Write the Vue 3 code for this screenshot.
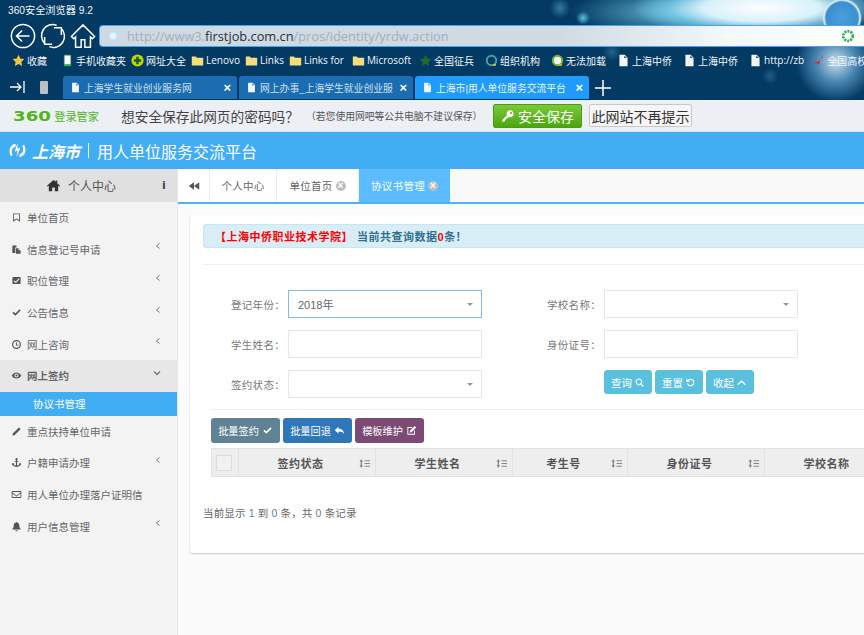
<script setup>
const icons = {
  home: 'M8 2 1 8.2l.8 1L3 8.1V14h3.6v-4h2.8v4H13V8.1l1.2 1.1.8-1-3-2.7V2.6h-1.8v1.3z',
  bookmark: 'M3 2h10v12l-5-3-5 3zM4.2 3.2v8.5L8 9.6l3.8 2.1V3.2z',
  files: 'M2 2h6v3H6v8H2zM7 6h4l3 3v5H7zM11 6.5V9h3z',
  checkSquare: 'M3 3h10a1 1 0 0 1 1 1v8a1 1 0 0 1-1 1H3a1 1 0 0 1-1-1V4a1 1 0 0 1 1-1zm1.3 5L3.6 9 7 11.8l5.5-6-1-1L7 9.6z',
  check: 'M2 8.6 3.8 6.8 6.4 9.3 12.3 3.4 14 5.2 6.4 12.8z',
  clock: 'M8 1.5a6.5 6.5 0 1 1 0 13 6.5 6.5 0 0 1 0-13zm0 1.8a4.7 4.7 0 1 0 0 9.4 4.7 4.7 0 0 0 0-9.4zM7.2 5h1.4v3.2H11v1.3H7.2z',
  eye: 'M8 3.5c3.2 0 5.6 2.2 7 4.5-1.4 2.3-3.8 4.5-7 4.5S2.400 10.300 1 8c1.400-2.300 3.800-4.500 7-4.500zM8 5a3 3 0 1 0 0 6 3 3 0 0 0 0-6zm0 1.500a1.500 1.500 0 1 1 0 3 1.500 1.500 0 0 1 0-3z',
  pencil: 'M11.500 2 14 4.500 5.500 13 2 14l1-3.500z',
  anchor: 'M8 1.500a1.700 1.700 0 0 1 .8 3.200V6H11v1.300H8.800v5.200c1.500-.2 2.600-1 3-2L10.800 10 14 8.500l.6 3.500-1-.7C12.800 13.200 10.600 14.500 8 14.500S3.200 13.200 2.400 11.300l-1 .7L2 8.500 5.200 10l-1 .5c.4 1 1.500 1.800 3 2V7.300H5V6h2.200V4.700A1.700 1.700 0 0 1 8 1.500z',
  envelope: 'M2 3h12a1 1 0 0 1 1 1v8a1 1 0 0 1-1 1H2a1 1 0 0 1-1-1V4a1 1 0 0 1 1-1zm.2 1.200v.9L8 9.400l5.800-4.300v-.9zm0 2.300v5.300h11.600V6.500L8 10.900z',
  bell: 'M8 1.500c.5 0 .8.300.8.800 2 .4 3.200 2 3.200 4 0 3 .8 4.200 2 5.200v.8H2v-.8c1.200-1 2-2.200 2-5.200 0-2 1.200-3.600 3.200-4 0-.5.300-.8.800-.8zM6.300 13.300h3.400a1.700 1.700 0 0 1-3.400 0z',
  search: 'M7 2a5 5 0 0 1 4 8l3.200 3.200-1.300 1.300-3.200-3.200A5 5 0 1 1 7 2zm0 1.800a3.200 3.200 0 1 0 0 6.400 3.200 3.200 0 0 0 0-6.400z',
  undo: 'M8 2.500a5.500 5.500 0 1 1-5.200 7.300l1.700-.6A3.700 3.700 0 1 0 5.300 5.500L7 7.200H2V2.200l2 2a5.500 5.500 0 0 1 4-1.700z',
  up: 'M8 4.500 14 10.500 12.700 11.800 8 7.100 3.300 11.800 2 10.500z',
  reply: 'M6.500 2.500v3c4.500 0 8 2 8 8-1-3-3.500-4-8-4v3L1 7.500z',
  edit: 'M2 3h7.500L8.200 4.300H3.300v8.400h8.400V8.500L13 7.200V14H2zM12.500 1.500 14.700 3.700 8 10.400l-2.700.5.500-2.700z',
  key: 'M10.500 1.500a4 4 0 1 1-1.600 7.700L7.500 10.600H6v1.500H4.500v1.500L3.500 14.500H1.500v-2l5.300-5.300a4 4 0 0 1 3.700-5.700zm1 1.700a1.300 1.300 0 1 0 0 2.600 1.300 1.300 0 0 0 0-2.600z',
  doc: 'M3 1h6.500L13 4.500V15H3zM9 2v3h3z',
  folder: 'M1 3h5l1.200 1.500H15V14H1z'
}

const bookmarks = [
  { text: '收藏', kind: 'star', color: '#f3c33d' },
  { text: '手机收藏夹', kind: 'phone', cls: 'far' },
  { text: '网址大全', kind: 'plus' },
  { text: 'Lenovo', kind: 'folder' },
  { text: 'Links', kind: 'folder' },
  { text: 'Links for', kind: 'folder' },
  { text: 'Microsoft', kind: 'folder', cls: 'mid' },
  { text: '全国征兵', kind: 'star', color: '#1c6b2c', cls: 'mid' },
  { text: '组织机构', kind: 'ring', color: '#3fa6a0', cls: 'wide' },
  { text: '无法加载', kind: 'ring', color: '#6fb52e', inner: '#f4f4f4', cls: 'wide' },
  { text: '上海中侨', kind: 'doc', cls: 'wide' },
  { text: '上海中侨', kind: 'doc', cls: 'wide' },
  { text: 'http://zb', kind: 'doc', cls: 'wide' },
  { text: '全国高校', kind: 'flag', cls: 'mid' }
]

const browserTabs = [
  { title: '上海学生就业创业服务网' },
  { title: '网上办事_上海学生就业创业服' },
  { title: '上海市|用人单位服务交流平台', active: true }
]

const menu = [
  { text: '单位首页', icon: 'bookmark' },
  { text: '信息登记号申请', icon: 'files', more: true },
  { text: '职位管理', icon: 'checkSquare', more: true },
  { text: '公告信息', icon: 'check', more: true },
  { text: '网上咨询', icon: 'clock', more: true },
  { text: '网上签约', icon: 'eye', open: true },
  { text: '重点扶持单位申请', icon: 'pencil' },
  { text: '户籍申请办理', icon: 'anchor', more: true },
  { text: '用人单位办理落户证明信', icon: 'envelope' },
  { text: '用户信息管理', icon: 'bell', more: true }
]

const columns = [
  { label: '签约状态', width: 137, sort: true },
  { label: '学生姓名', width: 137, sort: true },
  { label: '考生号', width: 115, sort: true },
  { label: '身份证号', width: 137, sort: true },
  { label: '学校名称', width: 137, sort: true }
]
</script>

<template>
  <div class="screen">
    <div class="browser">
      <div class="title">360安全浏览器 9.2</div>
      <div class="nav-row">
        <svg class="nav-icon" viewBox="0 0 28 28"><circle cx="14" cy="14" r="12.500" /><path d="M21 14H7.500M13 8l-6 6 6 6" /></svg>
        <svg class="nav-icon" viewBox="0 0 28 28"><path d="M18 2.500A12 12 0 0 0 5 22M10 25.500A12 12 0 0 0 23 6M5 15v8h8M23 13V5h-8" /></svg>
        <svg class="nav-icon" viewBox="0 0 28 28"><path d="M14 2 1.500 14.500 4 17l2-2v11h6v-8h4v8h6V15l2 2 2.500-2.500z" /></svg>
        <div class="address">
          <span class="globe"></span>
          <span class="url">http://www3.<b>firstjob.com.cn</b>/pros/identity/yrdw.action</span>
          <svg class="addr-ring" viewBox="0 0 16 16"><circle cx="8" cy="8" r="5.500" /></svg>
        </div>
      </div>
      <div class="bookmarks">
        <div v-for="(b, i) in bookmarks" :key="i" class="bookmark" :class="b.cls">
          <svg v-if="b.kind === 'star'" class="bm-icon" viewBox="0 0 16 16"><path :fill="b.color" d="M8 1l2.200 4.600 5 .7-3.600 3.500.9 5L8 12.400l-4.500 2.400.9-5L.8 6.300l5-.7z" /></svg>
          <svg v-else-if="b.kind === 'phone'" class="bm-icon" viewBox="0 0 16 16"><rect x="3.500" y="1" width="9" height="14" rx="1" fill="#35a853" /><rect x="4.500" y="2" width="7" height="10.500" fill="#fff" /></svg>
          <svg v-else-if="b.kind === 'plus'" class="bm-icon" viewBox="0 0 16 16"><circle cx="8" cy="8" r="7.500" fill="#c8d400" /><path fill="#0c5f2b" d="M6.500 3.500h3v3h3v3h-3v3h-3v-3h-3v-3h3z" /></svg>
          <svg v-else-if="b.kind === 'folder'" class="bm-icon" viewBox="0 0 16 16"><path fill="#f7dc7c" :d="icons.folder" /></svg>
          <svg v-else-if="b.kind === 'ring'" class="bm-icon" viewBox="0 0 16 16"><circle cx="8" cy="8" r="5.800" :fill="b.inner || 'none'" :stroke="b.color" stroke-width="2.400" /><path fill="#f0c419" d="M10 12.500h3.500v2H10z" /></svg>
          <svg v-else-if="b.kind === 'doc'" class="bm-icon" viewBox="0 0 16 16"><path fill="#f4f4f4" :d="icons.doc" /></svg>
          <svg v-else class="bm-icon" viewBox="0 0 16 16"><path fill="#e2231a" d="M14 1c-1 5-4 8-12 10 4 0 6 1 7 3-1-3 2-8 5-13z" /></svg>
          <span>{{ b.text }}</span>
        </div>
      </div>
      <div class="tab-row">
        <svg class="pin" viewBox="0 0 16 16"><path d="M1 8h11M8 4l4 4-4 4M15 2v12" /></svg>
        <span class="phone"></span>
        <div v-for="t in browserTabs" :key="t.title" class="browser-tab" :class="{ active: t.active }">
          <svg class="tab-doc" viewBox="0 0 16 16"><path :d="icons.doc" /></svg>
          <span class="tab-title">{{ t.title }}</span>
          <span class="tab-close">×</span>
        </div>
        <svg class="plus" viewBox="0 0 16 16"><path d="M8 0v16M0 8h16" /></svg>
      </div>
    </div>

    <div class="infobar">
      <div class="brand"><b>360</b><span>登录管家</span></div>
      <span class="ask">想安全保存此网页的密码吗？</span>
      <span class="note">（若您使用网吧等公共电脑不建议保存）</span>
      <button class="save"><svg viewBox="0 0 16 16"><path :d="icons.key" /></svg>安全保存</button>
      <button class="never">此网站不再提示</button>
    </div>

    <header class="site-header">
      <svg class="logo" viewBox="0 0 20 20"><path d="M8 3C2 4 0 10 3 16l2-1C3 11 4 7 8 6zM12 17c6-1 8-7 5-13l-2 1c2 4 1 8-3 9zM10 2 7 11l3-1-1 7 4-10-3 1z" /></svg>
      <span class="city">上海市</span>
      <span class="bar"></span>
      <span class="platform">用人单位服务交流平台</span>
    </header>

    <div class="body">
      <aside class="sidebar">
        <div class="side-head">
          <svg viewBox="0 0 16 16"><path :d="icons.home" /></svg>
          <span>个人中心</span>
          <em>i</em>
        </div>
        <template v-for="m in menu" :key="m.text">
          <div class="menu-item" :class="{ open: m.open }">
            <svg class="menu-icon" viewBox="0 0 16 16"><path :d="icons[m.icon]" /></svg>
            <span>{{ m.text }}</span>
            <svg v-if="m.more" class="chev" viewBox="0 0 8 8"><path d="M5.500 1.500 2.500 4l3 2.500" /></svg>
            <svg v-if="m.open" class="chev down" viewBox="0 0 8 8"><path d="M1 2.500 4 5.500l3-3" /></svg>
          </div>
          <div v-if="m.open" class="sub-item">协议书管理</div>
        </template>
      </aside>

      <main class="main">
        <div class="page-tabs">
          <div class="collapse">
            <svg viewBox="0 0 16 16"><path d="M8 3v10L1 8zM15 3v10L8 8z" /></svg>
          </div>
          <div class="page-tab plain">个人中心</div>
          <div class="page-tab plain">单位首页<i class="x">×</i></div>
          <div class="page-tab current">协议书管理<i class="x">×</i></div>
          <div class="tab-fill"></div>
        </div>

        <section class="card">
          <div class="alert">
            <b class="red">【上海中侨职业技术学院】</b>
            <b class="count">当前共查询数据<span class="red">0</span>条！</b>
          </div>
          <hr class="line" />

          <form class="search-form">
            <label>登记年份：</label>
            <div class="field focus">2018年<i class="caret"></i></div>
            <label>学校名称：</label>
            <div class="field"><i class="caret"></i></div>
            <label>学生姓名：</label>
            <div class="field"></div>
            <label>身份证号：</label>
            <div class="field"></div>
            <label>签约状态：</label>
            <div class="field"><i class="caret"></i></div>
            <span></span>
            <div class="form-btns">
              <button type="button" class="info">查询<svg viewBox="0 0 16 16"><path :d="icons.search" /></svg></button>
              <button type="button" class="info">重置<svg viewBox="0 0 16 16"><path :d="icons.undo" /></svg></button>
              <button type="button" class="info">收起<svg viewBox="0 0 16 16"><path :d="icons.up" /></svg></button>
            </div>
          </form>
          <hr class="line second" />

          <div class="toolbar">
            <button class="slate">批量签约<svg viewBox="0 0 16 16"><path :d="icons.check" /></svg></button>
            <button class="blue">批量回退<svg viewBox="0 0 16 16"><path :d="icons.reply" /></svg></button>
            <button class="plum">模板维护<svg viewBox="0 0 16 16"><path :d="icons.edit" /></svg></button>
          </div>

          <table class="grid">
            <thead>
              <tr>
                <th class="check-col"><span class="box"></span></th>
                <th v-for="c in columns" :key="c.label" :style="{ width: c.width + 'px' }">
                  {{ c.label }}
                  <svg v-if="c.sort" class="sort" viewBox="0 0 12 12"><path d="M2.500 1 4.500 4H3.200v4h1.300L2.500 11 .5 8h1.300V4H.5zM6 2.500h6v1H6zM6 5.500h6v1H6zM6 8.500h6v1H6z" /></svg>
                </th>
              </tr>
            </thead>
          </table>

          <p class="summary">当前显示 <span>1</span> 到 <span>0</span> 条，共 <span>0</span> 条记录</p>
        </section>
      </main>
    </div>
  </div>
</template>

<style scoped>
.screen {
  width: 864px;
  height: 635px;
  overflow: hidden;
  display: flex;
  flex-direction: column;
  font-family: "Liberation Sans", "Noto Sans CJK SC", sans-serif;
  color: #666;
}

svg {
  flex: none;
  fill: currentColor;
}

button {
  font-family: inherit;
  cursor: pointer;
}

/* browser chrome */
.browser {
  height: 100px;
  flex: none;
  color: #f2f6fa;
  background:
    radial-gradient(circle at 836px 62px, rgba(225, 240, 250, 0.9) 0, rgba(110, 175, 220, 0.65) 20px, rgba(3, 58, 99, 0) 40px),
    radial-gradient(circle at 842px 18px, #4a9fdc 0, #3a8fd0 16px, #dfeef8 18px, rgba(223, 238, 248, 0) 20px),
    radial-gradient(ellipse 130px 30px at 762px 8px, #fdfeff 0, #d8f1fb 45%, rgba(120, 205, 235, 0.7) 72%, rgba(3, 58, 99, 0) 100%),
    radial-gradient(ellipse 110px 26px at 680px 12px, rgba(120, 205, 232, 0.9) 0, rgba(3, 58, 99, 0) 100%),
    radial-gradient(circle at 583px 18px, rgba(95, 200, 220, 0.95) 0, rgba(95, 200, 220, 0) 7px),
    radial-gradient(circle at 560px 8px, rgba(70, 140, 175, 0.8) 0, rgba(70, 140, 175, 0) 10px),
    radial-gradient(circle at 612px 52px, rgba(60, 125, 160, 0.6) 0, rgba(60, 125, 160, 0) 9px),
    radial-gradient(circle at 770px 76px, rgba(60, 125, 160, 0.55) 0, rgba(60, 125, 160, 0) 8px),
    #033a63;
}

.title {
  height: 22px;
  padding: 3px 0 0 8px;
  font-size: 10.200px;
  line-height: 16px;
  box-sizing: border-box;
}

.nav-row {
  height: 28px;
  display: flex;
  align-items: center;
  padding-left: 10px;
}

.nav-icon {
  width: 26px;
  height: 26px;
  margin-right: 4px;
  fill: none;
  stroke: #fff;
  stroke-width: 1.600;
}

.address {
  flex: 1;
  height: 20px;
  margin-left: -1px;
  display: flex;
  align-items: center;
  border: 1px solid #4aa3e8;
  border-right: none;
  border-radius: 4px 0 0 4px;
  background: linear-gradient(90deg, #cdd9e3 0, #cfdae4 60%, #f2f8fc 82%, #fff 100%);
}

.globe {
  width: 10px;
  height: 10px;
  margin: 0 9px 0 8px;
  border-radius: 50%;
  background: radial-gradient(circle, #e8f5ff 30%, #8cc8f2 100%);
}

.url {
  flex: 1;
  font-family: "Open Sans", sans-serif;
  font-size: 12.800px;
  color: #a3afba;
}

.url b {
  font-weight: 400;
  color: #28323c;
}

.addr-ring {
  width: 14px;
  height: 14px;
  margin-right: 9px;
  fill: none;
  stroke: #35b05a;
  stroke-width: 3;
  stroke-dasharray: 2.500 1;
}

.bookmarks {
  height: 18px;
  margin-top: 1px;
  padding-left: 12px;
  display: flex;
  align-items: center;
  white-space: nowrap;
  font-family: "Open Sans", "Noto Sans CJK SC", sans-serif;
  font-size: 10px;
}

.bookmark {
  display: flex;
  align-items: center;
  gap: 2px;
  margin-right: 5px;
}

.bookmark.far {
  margin-left: 9px;
}

.bookmark.mid {
  margin-left: 3px;
}

.bookmark.wide {
  margin-left: 6px;
}

.bm-icon {
  width: 13px;
  height: 13px;
}

.tab-row {
  height: 24px;
  margin-top: 7px;
  display: flex;
  align-items: stretch;
  gap: 2px;
}

.pin {
  width: 16px;
  height: 16px;
  margin: 3px 0 0 9px;
  fill: none;
  stroke: #fff;
  stroke-width: 1.300;
}

.phone {
  width: 8px;
  height: 13px;
  margin: 5px 13px 0 13px;
  border-radius: 1px;
  background: #b9c0c6;
}

.browser-tab {
  width: 174px;
  height: 23px;
  padding: 0 6px 0 7px;
  box-sizing: border-box;
  display: flex;
  align-items: center;
  border-radius: 3px 3px 0 0;
  background: #1b6cb0;
  color: #cfe2f2;
  font-size: 9.800px;
}

.browser-tab.active {
  background: #1f9bfd;
  color: #eaf5ff;
}

.tab-doc {
  width: 11px;
  height: 11px;
  margin-right: 3px;
  fill: #f4f7fa;
}

.tab-title {
  flex: 1;
  overflow: hidden;
  white-space: nowrap;
}

.tab-close {
  margin-left: 4px;
  font-size: 13px;
  font-weight: 700;
  color: #fff;
}

.plus {
  width: 16px;
  height: 16px;
  margin: 4px 0 0 4px;
  fill: none;
  stroke: #fff;
  stroke-width: 1.500;
}

/* password bar */
.infobar {
  height: 32px;
  flex: none;
  display: flex;
  align-items: center;
  background: #eceff4;
  border-bottom: 1px solid #dfe2e8;
  box-sizing: border-box;
  color: #444;
}

.brand {
  width: 121px;
  padding-left: 13px;
  box-sizing: border-box;
  display: flex;
  align-items: center;
  gap: 4px;
  color: #53b51c;
}

.brand b {
  font-size: 14px;
  font-family: "DejaVu Sans", sans-serif;
  transform: scaleX(1.300);
  transform-origin: left;
  margin-right: 8px;
}

.brand span {
  font-size: 11.200px;
}

.ask {
  font-size: 13.700px;
  width: 185px;
  white-space: nowrap;
}

.note {
  font-size: 9.800px;
  width: 187px;
  color: #555;
  white-space: nowrap;
}

.save {
  width: 89px;
  height: 24px;
  margin-right: 7px;
  padding: 0;
  display: flex;
  align-items: center;
  justify-content: center;
  gap: 3px;
  border: 1px solid #4c9c12;
  border-radius: 2px;
  background: linear-gradient(#7bc93a, #4aa70f);
  color: #fff;
  font-size: 14px;
}

.save svg {
  width: 14px;
  height: 14px;
}

.never {
  width: 103px;
  height: 23px;
  padding: 0;
  border: 1px solid #c6c8cc;
  border-radius: 2px;
  background: #f6f6f6;
  color: #333;
  font-size: 14px;
}

/* site header */
.site-header {
  height: 37px;
  flex: none;
  display: flex;
  align-items: center;
  padding-left: 8px;
  background: #41adf3;
  color: #fff;
}

.logo {
  width: 19px;
  height: 19px;
}

.city {
  margin-left: 5px;
  font-family: "Noto Sans CJK SC", sans-serif;
  font-size: 16px;
  font-weight: 700;
  font-style: italic;
}

.bar {
  width: 1px;
  height: 15px;
  margin: 0 8px;
  background: #fff;
}

.platform {
  font-size: 16px;
}

/* layout below the header */
.body {
  flex: 1;
  display: flex;
  min-height: 0;
}

.sidebar {
  width: 178px;
  flex: none;
  background: #f3f3f3;
  border-right: 1px solid #e6e6e6;
  box-sizing: border-box;
  font-size: 10.500px;
}

.side-head {
  height: 33px;
  position: relative;
  display: flex;
  align-items: center;
  padding-left: 46px;
  background: #e0e0e0;
  color: #555;
  font-size: 12px;
}

.side-head svg {
  width: 15px;
  height: 15px;
  margin-right: 7px;
  color: #333;
}

.side-head em {
  position: absolute;
  left: 162px;
  font-family: "DejaVu Sans", sans-serif;
  font-weight: 700;
  font-style: normal;
  font-size: 11px;
  color: #444;
}

.menu-item {
  height: 31.600px;
  display: flex;
  align-items: center;
  padding-left: 11px;
  color: #666;
}

.menu-item.open {
  background: #e7e7e7;
  font-weight: 700;
}

.menu-icon {
  width: 11px;
  height: 11px;
  margin-right: 5px;
  color: #555;
}

.chev {
  width: 8px;
  height: 8px;
  margin-left: auto;
  margin-right: 15px;
  margin-top: -6px;
  fill: none;
  stroke: #777;
  stroke-width: 1;
}

.chev.down {
  margin-right: 16px;
  stroke-width: 1.300;
}

.sub-item {
  height: 24px;
  line-height: 24px;
  padding-left: 33px;
  background: #41adf3;
  color: #fff;
}

.main {
  flex: 1;
  min-width: 0;
  background: #fbfbfb;
}

.page-tabs {
  height: 35px;
  display: flex;
  border-bottom: 2px solid #4ab4f5;
  box-sizing: border-box;
  background: #fff;
  font-size: 10.500px;
}

.collapse {
  width: 32px;
  display: flex;
  align-items: center;
  justify-content: center;
  border-right: 1px solid #eee;
  box-sizing: border-box;
  color: #555;
}

.collapse svg {
  width: 12px;
  height: 12px;
}

.page-tab {
  display: flex;
  align-items: center;
  justify-content: center;
  box-sizing: border-box;
  letter-spacing: 0.300px;
}

.page-tab.plain {
  width: 67px;
  border-right: 1px solid #eee;
}

.page-tab.plain + .page-tab.plain {
  width: 82px;
}

.page-tab.current {
  width: 91px;
  background: #5bbcff;
  color: #fff;
}

.x {
  width: 10px;
  height: 10px;
  margin-left: 3px;
  border-radius: 50%;
  background: #bfbfbf;
  color: #fff;
  font-style: normal;
  font-weight: 700;
  font-size: 10px;
  line-height: 10px;
  text-align: center;
}

.tab-fill {
  flex: 1;
  background: #f9f9f9;
}

/* card */
.card {
  width: 760px;
  height: 338px;
  margin: 11px 0 0 12px;
  padding: 9px 0 0 13px;
  box-sizing: border-box;
  background: #fff;
  border-radius: 3px;
  box-shadow: 0 1px 2px rgba(0, 0, 0, 0.2);
}

.alert {
  height: 24px;
  padding-left: 11px;
  display: flex;
  align-items: center;
  gap: 4px;
  box-sizing: border-box;
  background: #d9edf7;
  border: 1px solid #c6e6f2;
  border-radius: 3px;
  font-size: 11px;
  letter-spacing: 0.500px;
  color: #31708f;
}

.red {
  color: #f00;
}

.line {
  margin: 16px 0 0;
  border: none;
  border-top: 1px solid #eee;
}

.line.second {
  margin: 11px 0 0 8px;
}

.search-form {
  display: grid;
  grid-template-columns: 85px 194px 122px 194px;
  grid-auto-rows: 28px;
  row-gap: 12px;
  margin-top: 25px;
  font-size: 10.500px;
}

.search-form label {
  align-self: center;
  padding-right: 3px;
  text-align: right;
  letter-spacing: 0.300px;
  color: #777;
}

.field {
  position: relative;
  padding-left: 9px;
  display: flex;
  align-items: center;
  border: 1px solid #e8e8e8;
  box-sizing: border-box;
  font-size: 11px;
  color: #666;
}

.field.focus {
  border-color: #7dbcec;
}

.caret {
  position: absolute;
  right: 8px;
  top: 12px;
  border: 3.500px solid transparent;
  border-top: 3.500px solid #999;
  border-bottom: none;
}

.form-btns {
  display: flex;
  gap: 3px;
  align-items: flex-start;
}

.form-btns button {
  height: 24px;
  width: 48px;
  padding: 0;
  display: flex;
  align-items: center;
  justify-content: center;
  gap: 2px;
  border: 1px solid #5bc0de;
  border-radius: 3px;
  background: #5bc0de;
  color: #fff;
  font-size: 10.500px;
}

.form-btns svg {
  width: 11px;
  height: 11px;
}

.toolbar {
  display: flex;
  gap: 3px;
  margin: 8px 0 0 8px;
}

.toolbar button {
  width: 69px;
  height: 25px;
  padding: 0;
  display: flex;
  align-items: center;
  justify-content: center;
  gap: 3px;
  border: 1px solid transparent;
  border-radius: 3px;
  color: #fff;
  font-size: 10.200px;
}

.toolbar svg {
  width: 11px;
  height: 11px;
}

.slate {
  background: #5f8295;
  border-color: #557788;
}

.blue {
  background: #2f77b6;
  border-color: #2e6da4;
}

.plum {
  background: #7c4a74;
  border-color: #70406a;
}

.grid {
  table-layout: fixed;
  width: 690px;
  margin: 5px 0 0 8px;
  border-collapse: collapse;
}

.grid th {
  position: relative;
  height: 28px;
  padding: 0 13px 0 0;
  box-sizing: border-box;
  background: #eee;
  border: 1px solid #e2e2e2;
  border-width: 1px 1px 1px 0;
  font-size: 11px;
  letter-spacing: 0.500px;
  color: #555;
}

.grid th.check-col {
  width: 27px;
  padding: 0;
  border-left: 1px solid #e2e2e2;
}

.box {
  display: block;
  width: 14px;
  height: 14px;
  margin: 0 auto 0 4px;
  background: #f1f1f1;
  border: 1px solid #ddd;
}

.sort {
  position: absolute;
  right: 5px;
  top: 9px;
  width: 11px;
  height: 11px;
  color: #888;
}

.summary {
  margin: 28px 0 0;
  font-size: 10.500px;
  letter-spacing: 0.150px;
  color: #666;
}

.summary span {
  color: #5f8295;
}
</style>
